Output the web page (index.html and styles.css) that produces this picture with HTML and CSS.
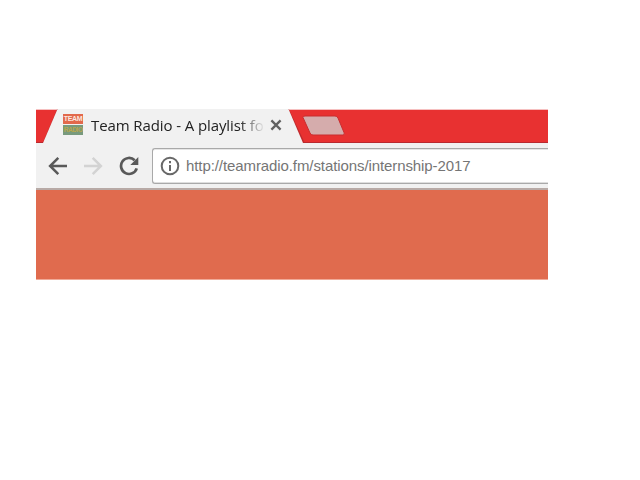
FILE: index.html
```html
<!DOCTYPE html>
<html lang="en">
<head>
<meta charset="utf-8">
<title>Team Radio</title>
<link rel="stylesheet" href="styles.css">
</head>
<body>
<main class="browser">
  <header class="tabs">
    <svg class="tab-shapes" viewBox="0 0 512 34" aria-hidden="true">
      <path class="tab-shade" d="M22 0 7.500 34H268L252 0Z"/>
      <path class="tab-face" d="M21.500 0 7 34H267L252.500 0Z"/>
      <path class="new-tab" d="M269 7H299Q301 7 302 9L308 23.500Q309 26 307 26H277Q275 26 274 24L267 8.500Q266.500 7 269 7Z"/>
    </svg>
    <div class="tab">
      <div class="favicon"><span class="fav-top">TEAM</span><span class="fav-bottom">RADIO</span></div>
      <span class="tab-title">Team Radio - A playlist fo</span>
      <svg class="close" viewBox="0 0 12 12"><path d="m1.400 1.400 9.200 9.200M10.600 1.400 1.400 10.600"/></svg>
    </div>
  </header>
  <nav class="toolbar">
    <svg class="arrow" viewBox="0 0 20 20"><path d="M19 10H2.500M10.300 1.800 2.100 10l8.200 8.200"/></svg>
    <svg class="arrow forward" viewBox="0 0 20 20"><path d="M1 10h16.500M9.700 1.800 17.900 10l-8.200 8.200"/></svg>
    <svg class="reload" viewBox="0 0 20 20"><path class="ring" d="M17.700 12.300A8 8 0 1 1 15.700 4.300"/><path class="tip" d="M19.300 1v8h-8Z"/></svg>
    <div class="address">
      <svg class="info" viewBox="0 0 20 20"><circle cx="10" cy="10" r="8.300"/><path d="M10 9v6M10 5v2.300"/></svg>
      <span class="url">http://teamradio.fm/stations/internship-2017</span>
    </div>
  </nav>
  <section class="page"></section>
</main>
</body>
</html>
```
FILE: styles.css
```css
* { box-sizing: border-box; }
body { margin: 0; background: #fff; }
.browser { width: 512px; margin: 109px 0 0 36px; overflow: hidden; }
.tabs {
  position: relative;
  height: 34px;
  background: #e83131;
  border-top: 1px solid #f6c0c0;
  border-bottom: 1px solid #b92a30;
}
.tab-shapes { position: absolute; left: 0; top: -1px; width: 512px; height: 34px; }
.tab-shade { fill: none; stroke: #bd2b2e; stroke-width: 1.5; }
.tab-face { fill: #f1f1f1; }
.new-tab { fill: #d5acac; stroke: #c92d2f; stroke-width: 1; }
.tab { position: relative; display: flex; align-items: center; height: 29px; padding-left: 27px; }
.favicon {
  display: flex;
  flex-direction: column;
  gap: 1px;
  width: 20px;
  height: 21px;
  font: bold 7px/10px "Liberation Sans", sans-serif;
  text-align: center;
}
.favicon span { display: block; height: 10px; }
.fav-top { background: #e2694c; color: #fbe7df; letter-spacing: -0.3px; }
.fav-bottom { background: #789a7d; color: #b9a74b; font-size: 6.5px; letter-spacing: -0.5px; }
.tab-title {
  width: 172px;
  margin-left: 8px;
  white-space: nowrap;
  font: 15px/22px "Open Sans", sans-serif;
  letter-spacing: -0.1px;
  color: #222;
  -webkit-mask-image: linear-gradient(90deg, #000 148px, transparent 174px);
  mask-image: linear-gradient(90deg, #000 148px, transparent 174px);
}
.close { width: 12px; height: 12px; margin-left: 7px; fill: none; stroke: #626262; stroke-width: 2.3; }
.toolbar { display: flex; align-items: center; height: 47px; padding-left: 12px; background: #f1f1f1; border-bottom: 2px solid #b8aaa6; }
.arrow { width: 20px; height: 20px; fill: none; stroke: #595959; stroke-width: 2.5; }
.forward { margin-left: 15px; stroke: #d3d3d3; }
.reload { width: 20px; height: 20px; margin-left: 16px; }
.ring { fill: none; stroke: #595959; stroke-width: 2.7; }
.tip { fill: #595959; }
.address {
  display: flex;
  align-items: center;
  flex: 1;
  height: 36px;
  margin-left: 13px;
  padding-left: 7px;
  background: #fff;
  border: 1px solid #a9a9a9;
  border-right: 0;
  border-radius: 3px 0 0 3px;
  box-shadow: inset 0 1px #e6e6e6, inset 0 -1px #dedede;
}
.info { width: 20px; height: 20px; fill: none; stroke: #686868; stroke-width: 2; }
.url { margin-left: 6px; font: 15px/20px "Liberation Sans", Arial, sans-serif; letter-spacing: -0.09px; color: #757575; white-space: nowrap; }
.page { height: 90px; background: #e06b4e; border-bottom: 1px solid #f0aa98; }
```
